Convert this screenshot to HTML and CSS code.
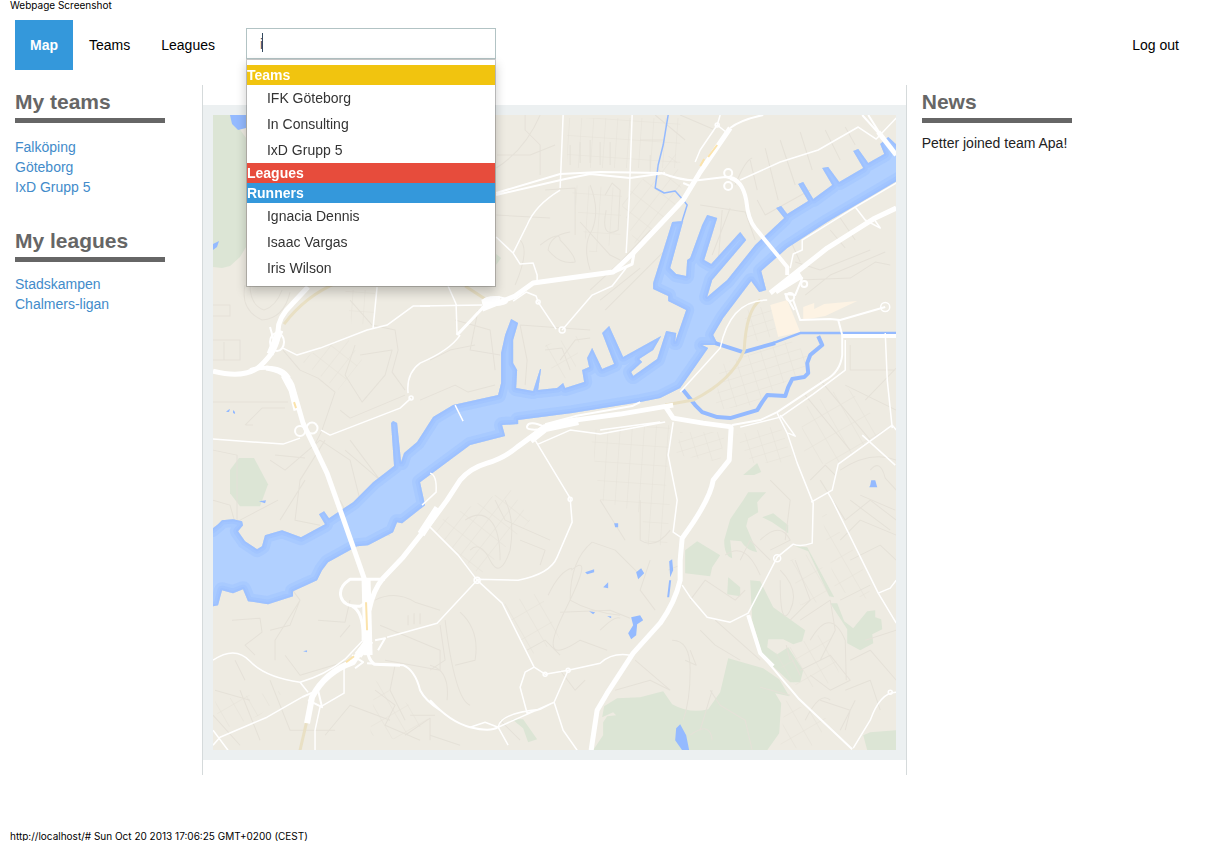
FILE: index.html
```html
<!DOCTYPE html>
<html lang="en">
<head>
<meta charset="utf-8">
<title>Map</title>
<link rel="stylesheet" href="styles.css">
</head>
<body>
<p class="page-note">Webpage Screenshot</p>
<header class="topbar">
  <nav class="menu">
    <a class="menu-link active" href="#">Map</a>
    <a class="menu-link" href="#">Teams</a>
    <a class="menu-link" href="#">Leagues</a>
  </nav>
  <div class="search">
    <input class="search-input" type="text" value="i" aria-label="Search" autofocus onfocus="this.setSelectionRange(1,1)">
    <span class="caret"></span>
    <div class="results">
      <h2 class="group group-teams">Teams</h2>
      <a class="result" href="#">IFK Göteborg</a>
      <a class="result" href="#">In Consulting</a>
      <a class="result" href="#">IxD Grupp 5</a>
      <h2 class="group group-leagues">Leagues</h2>
      <h2 class="group group-runners">Runners</h2>
      <a class="result" href="#">Ignacia Dennis</a>
      <a class="result" href="#">Isaac Vargas</a>
      <a class="result" href="#">Iris Wilson</a>
    </div>
  </div>
  <a class="menu-link logout" href="#">Log out</a>
</header>
<div class="columns">
  <aside class="side">
    <section class="block">
      <h1 class="heading">My teams</h1>
      <ul class="links links-teams">
        <li><a href="#">Falköping</a></li>
        <li><a href="#">Göteborg</a></li>
        <li><a href="#">IxD Grupp 5</a></li>
      </ul>
    </section>
    <section class="block">
      <h1 class="heading">My leagues</h1>
      <ul class="links">
        <li><a href="#">Stadskampen</a></li>
        <li><a href="#">Chalmers-ligan</a></li>
      </ul>
    </section>
  </aside>
  <main class="center">
    <div class="map-frame">
      <svg class="map" viewBox="213 115 683 635" role="img" aria-label="Map of Göteborg">
        <defs>
          <pattern id="gridA" width="11" height="17" patternUnits="userSpaceOnUse" patternTransform="rotate(38)"><path class="grid" d="M0 0H11M0 0V17"/></pattern>
          <pattern id="gridB" width="13" height="9" patternUnits="userSpaceOnUse" patternTransform="rotate(-17)"><path class="grid" d="M0 0H13M0 0V9"/></pattern>
          <pattern id="gridC" width="12" height="19" patternUnits="userSpaceOnUse" patternTransform="rotate(4)"><path class="grid" d="M0 0H12M0 0V19"/></pattern>
          <pattern id="gridD" width="15" height="22" patternUnits="userSpaceOnUse" patternTransform="rotate(-30)"><path class="grid" d="M0 0H15M0 0V22"/></pattern>
          <path id="river" d="M205 529H212L218 524 222 520 233 519 242 521 243 525 238 531 245 541 257 549 262 546 265 535 282 530 301 537 325 524 319 514 324 511 329 518 353 502 373 482 394 466 391 423 393 421 397 423 401 462 404 453 417 442 433 417 453 405 498 395 501 383V353L505 335 511 319 518 323 513 340V363L517 370 516 388 533 391 540 369 541 369 538 390 557 388 563 383 565 388 584 382 582 370 589 367 587 358 592 348 602 369 614 364 602 333 609 326 623 357 661 336 653 350 639 359 642 362 631 372 633 376 657 359 666 331 676 333 675 342 686 310 668 301V296L653 289V283L672 222 683 221 670 268 676 274 686 276 687 260 690 258 702 225 707 215 717 218 704 260 711 264 740 232 746 240 712 280 707 297 727 280 755 245 784 218 776 208 781 206 787 214 808 201 798 184 803 182 813 199 832 185 822 168 828 167 839 182 863 168 853 151 858 149 868 163 884 154 880 144 888 137 905 153V176L827 222 787 248 761 271 766 290 759 292 751 281 723 318 713 335 718 345 702 345 708 348 680 388 660 398 640 402 572 413 518 420V424L502 425 505 436 470 445 420 482 425 505 402 523 397 522 393 532 368 545 357 546 328 562 322 570 317 580 293 591V596L268 604 248 601 243 589 233 593 222 590 218 605 205 608Z"/>
          <clipPath id="riverClip"><use href="#river"/></clipPath>
        </defs>
        <g class="park">
          <path d="M213 115H231Q240 130 246 138V247L240 257 230 266 222 268 213 267Z"/>
          <path d="M239 458H254L268 484 260 506H240L230 493V470Z"/>
          <path d="M593 750L603 735V722L607 716 616 715 613 712 602 717 604 706 617 698 640 697 663 691 672 704Q690 714 708 709L720 692 728 658 763 668 779 679 789 696 775 693 781 703 779 733 767 750Z"/>
          <path d="M743 500L748 492H766L757 502 758 512 748 518 746 526 757 552Q746 550 741 541L730 540 732 558Q724 556 724 540L730 519Z"/>
          <path d="M743 475L757 463 761 472 754 475ZM762 517L773 513 788 525V533L772 522Z"/>
          <path d="M685 550L697 541 720 555 712 567 710 576 685 573ZM728 577L740 587V596L727 594Z"/>
          <path d="M750 580L760 581 773 607 805 630 802 641 793 644 783 639 768 639 767 647 777 654 788 647 803 670 800 682 790 682 763 657 752 620Z"/>
          <path d="M795 546L807 547 834 597 829 596 808 551ZM830 603H837L844 621 853 628 867 611 875 610 875 617 881 619 882 629 872 634 873 643 860 650 847 643V629Z"/>
          <path d="M863 735L870 732 896 730V750H867ZM512 719H523L537 739 528 742 523 728ZM496 254L501 258 496 265Z"/>
        </g>
        <g class="zone"><path d="M770 305L787 300 800 332 778 337ZM803 307L814 303V309L824 304 857 301 825 316 803 320Z"/></g>

        <!-- local streets -->
        <g stroke="none">
          <path fill="url(#gridA)" d="M430 525L510 488 530 520 480 575ZM620 200L675 150 683 200 636 248ZM300 360L345 335 362 360 338 390Z"/>
          <path fill="url(#gridB)" d="M745 310L770 305 776 335 745 345ZM720 365L790 340 808 355 803 372 780 385 752 405 715 410ZM735 435L780 425 793 462 752 463ZM680 432L725 432 720 462 676 455Z"/>
          <path fill="url(#gridC)" d="M567 118H680V168H567ZM570 185L622 188 620 240 590 255ZM345 290H375V322L352 326ZM590 430L670 425 664 520 600 500ZM640 495L670 495 667 545 645 545Z"/>
          <path fill="url(#gridD)" d="M800 410L845 385 885 430 835 465 805 462ZM500 605L540 592 560 640 530 655ZM790 560L818 550 830 600 800 605ZM215 700L285 690 260 715 220 730ZM585 400L655 360 630 380 600 385ZM770 655L830 630 840 680 800 690ZM820 505L860 560 872 600 835 590ZM375 680L430 720 400 740 370 735ZM545 345L580 335 575 375 560 380 545 360ZM785 700L830 720 810 748 780 748Z"/>
        </g>
        <g class="street">
          <path d="M245 285Q240 310 262 320Q284 318 290 292M213 305H230V316H213M213 340H240V360H224V342M226 360H213M213 402H288M245 425L262 408H285M253 425H246M250 285Q250 305 264 310Q276 306 282 290"/>
          <path d="M283 350L300 370 318 378 335 392 322 430 315 444M350 300L372 325 395 330 398 350 392 372 405 390M360 355L392 350 385 375 362 402 345 375 355 345M340 410L350 418 405 395M430 360L450 350 475 345M478 310L470 350 500 355M455 320L490 330 495 370"/>
          <path d="M420 400L455 385 468 392 495 385M520 325L590 330M520 325L527 360 525 385M560 360L575 340 590 338M545 350L562 348 570 370M590 290L620 262 650 230M600 300L640 268M605 310L660 255 678 240"/>
          <path d="M496 168Q525 150 540 115M525 115V130L540 145V175M497 155H530L555 145M545 190L575 188V235M496 215L550 218M605 195L612 183 620 190 618 230Q600 240 606 210M540 245Q560 230 560 240Q575 255 575 262Q560 265 548 250Q550 235 570 232M515 285Q530 250 520 240M580 222L610 255 620 260M590 185Q600 210 592 230Q582 245 590 270"/>
          <path d="M570 145V165M580 142V163M590 140V163M600 142V165M610 142V165M650 155V175M655 115L685 140M680 115L715 130M640 140H665M700 205L745 212 755 240M722 210L718 262M730 208L712 255M750 160L757 190M765 148L778 200M780 140L795 185M800 132L812 170M825 130L840 160M845 127L855 145M735 185Q745 160 752 158M757 200L765 215 810 190"/>
          <path d="M795 262L820 270 870 250M805 295L830 275 885 252M800 280L850 278 875 262 890 265M830 230L845 248M840 218L855 240M790 240L800 262M850 345V370H895M865 400L896 368M845 385L896 410M820 380L870 440M805 395L850 450M840 470Q870 450 896 460M810 480L825 465 835 475M870 470Q880 458 885 478L896 490M860 495L895 510M850 500L890 530"/>
          <path d="M213 450L237 455V530M213 500L230 505 240 540M270 460L285 470 320 440M325 440L300 480 295 520 320 525M320 440L350 460 360 500M345 450L380 480M350 440L395 500M275 455L305 458M278 500L240 520M305 480L280 520"/>
          <path d="M232 620L260 618 262 632 245 645 255 655M285 580L300 600 290 625 270 630M300 600L275 640V660M318 620L345 622 350 600M350 625L340 637M375 600Q395 590 415 602L440 610M408 615V625M414 613V624M420 613V624M340 500L355 530 390 535M235 660L245 680M215 690L250 700M285 655L300 675 350 660M213 715L240 745M240 690L260 740M270 680L290 730 335 730"/>
          <path d="M375 690L395 705 385 725 420 740M395 665L390 690 405 720M325 735L350 705 390 720M410 715H435M405 735L430 718V740M380 625L440 650V670L385 660M440 625L445 660 430 670M460 612Q480 630 475 660L455 665M445 620Q455 700 470 705M430 665Q450 670 447 700M465 520Q480 510 490 520T500 560M470 550Q480 540 490 560T510 550Q515 520 505 500M520 540L545 550 540 565M495 500L505 520 550 540"/>
          <path d="M571 570Q595 550 565 610T580 640L607 650M592 542Q570 560 570 600Q590 612 620 615M592 542L615 550 640 575M548 595Q560 570 572 568M560 612L610 610 630 618M600 630Q615 615 620 618M500 720L520 740M560 670L575 690 585 680M527 650L545 640 560 655M640 500V540Q655 550 670 530M650 560L640 590 655 610M430 735L460 745M600 500L625 540M615 690L650 680 670 690M635 660L670 690"/>
          <path d="M672 640Q690 640 690 670T683 720M690 650L696 665 685 660M710 690L720 705 745 720 752 750M700 730L712 690M690 735Q710 720 712 740M760 687L790 695M668 570L680 565M690 600L705 580 735 600 745 590M700 630L715 645 740 660M715 620L760 660M725 555Q745 540 760 575M760 540Q780 520 790 540L770 550"/>
          <path d="M780 570Q800 590 790 610T780 580M795 560L810 600 790 620M800 620L830 600 835 630 820 660M810 640Q830 605 845 640L846 680M800 670L830 655 850 680 830 690 810 675M850 660L870 650 896 680M845 690L870 680 880 710M855 700L840 730M820 700L850 710 845 730M820 480L845 520 870 500 896 520M840 540L860 520 896 535M850 560L880 545 896 560M840 600L870 585M865 640L896 630M805 720Q820 690 830 700M785 540L790 500 770 480M740 560L750 540 770 560M790 655L800 675M786 645L790 660"/>
        </g>

        <!-- water -->
        <use class="water" href="#river"/>
        <g clip-path="url(#riverClip)">
          <use class="shore shore-outer" href="#river"/>
          <use class="shore shore-middle" href="#river"/>
          <use class="shore shore-inner" href="#river"/>
        </g>
        <g class="pond">
          <path d="M230 115H246V128L238 130 232 124ZM213 244L219 241 217 247 213 250ZM226 412L228 410 230 409 229 412ZM233 410L235 412 235 414 233 413ZM259 501L266 500 265 503ZM636 572L641 568 644 573 638 579ZM585 572L594 569 594 572 587 574ZM603 587L608 582V588ZM589 611L595 612 593 614ZM614 523H618V527H615ZM631 617L640 615 643 620 637 624 636 635 631 639 628 633 633 625ZM870 485L871 480 875 480 877 487H869ZM669 561L672 559 673 570 670 577ZM669 580H671L669 597H667ZM676 728L680 724 686 735 689 750H682L675 740ZM303 651L307 650V652ZM607 616H611V618Z"/>
        </g>
        <g class="canal">
          <path stroke-width="1.5" d="M668 115L663 145 658 165 655 188 664 193 675 191 683 200 687 205 682 221"/>
          <path stroke-width="4" d="M715 343L743 352 775 343"/><path stroke-width="2.5" d="M773 343L800 333H896"/>
          <path stroke-width="4" d="M683 390L695 405 702 412 717 417 730 418 757 410 762 402 767 395 785 396 788 387 792 379 804 377 808 373 807 363 810 355 822 345 818 336"/>
        </g>

        <!-- railway -->
        <g class="rail"><path d="M760 300Q746 310 744 350Q733 380 693 400L665 405"/><path d="M284 324Q305 296 338 282M465 286L485 299M307 720L300 750"/></g>

        <!-- secondary roads -->
        <g class="road">
          <path d="M563 115L560 188M632 115L629 200 626 253M560 190Q535 205 527 225L513 253 520 264 533 263 537 275V284M496 237L513 253M513 301L526 292 536 296 538 302 556 329M562 330L592 295 612 286 626 268M456 304L448 286M456 304L457 335M420 306L482 305"/>
          <path d="M460 335Q450 350 420 363Q406 373 408 393M411 398L400 408 330 435 321 430M283 348L297 355 320 348 367 330 387 325 413 306H430M377 287L373 328M213 439L283 444 300 438"/>
          <path d="M213 660Q235 645 250 661T300 682Q325 675 345 659L363 640M213 745L220 737 267 717 302 697M213 730L228 750M344 665V693L320 707 315 730V750M300 682L308 692"/>
          <path d="M430 527L458 555 477 580 502 603 534 667 545 674 568 670 600 663Q612 652 630 655M477 580L437 623 387 637M535 440L570 498 572 522 557 557Q550 574 518 580L477 579"/>
          <path d="M568 670L554 702 563 730 577 750M554 702L498 727 485 722 470 727M534 667L525 672 520 687 527 713 540 709M498 727Q500 713 540 709L554 702M498 727L508 745"/>
          <path d="M673 422L668 455 677 500 673 532 682 538M680 392L720 348Q730 300 767 300M777 413L787 433 797 463 813 503 812 543Q800 547 793 544L777 557 748 613 730 622 707 617 690 597 682 585"/>
          <path d="M811 502L832 490 838 464 892 425 896 430M885 333L887 380 892 428M862 435L895 465M828 493L832 500 878 593 896 623M878 593L890 588 896 580M788 433L795 436 780 415"/>
          <path d="M853 748L870 720Q880 692 896 692M600 430L660 422M538 444L570 430 600 434 665 422M740 180L780 162 818 150 858 127 876 139 896 118M717 125L700 150 695 162M720 115L717 125 727 133M790 268L793 254 802 250V240L855 207 896 183M855 207L865 220 880 228 873 218M845 340V370L813 394 780 417 740 427"/>
          <path d="M430 473Q437 475 436 492L422 505M455 405L463 421"/>
          <circle cx="411" cy="398" r="2"/><circle cx="562" cy="330" r="3"/><circle cx="477" cy="580" r="3"/><circle cx="570" cy="499" r="2"/><circle cx="885" cy="307" r="4.5"/><circle cx="568" cy="670" r="2"/><circle cx="545" cy="674" r="2"/><circle cx="538" cy="302" r="2"/><circle cx="717" cy="125" r="2"/><circle cx="777" cy="558" r="3.5"/><circle cx="890" cy="692" r="2"/>
        </g>
        <g class="road wide">
          <path d="M496 193L560 174 600 172 661 173Q685 182 700 180L725 177Q742 180 746 200Q748 220 755 228L787 267V275M496 195L565 179 590 174 630 178 665 173"/>
          <path stroke-width="4" d="M730 178Q742 180 746 200Q748 220 755 228L787 267V275"/>
          <path d="M793 300L800 320 830 319 840 320 885 307M838 320L842 335M842 335V355Q840 372 825 380L777 412 760 420 732 425M748 615L760 653 798 698 852 749M430 700Q450 722 470 727T498 727M367 663L403 665Q415 670 420 690Q425 700 440 710"/>
          <path stroke-width="4" d="M748 615L760 653 773 666M842 336H896"/>
          <path d="M730 128Q740 120 763 115M862 115L880 135M868 115L882 137M550 428Q525 432 527 426T545 427M545 424L575 416 632 406 640 402"/>
          <circle cx="728" cy="173" r="4"/><circle cx="728" cy="186" r="4"/><circle cx="804" cy="284" r="3"/><circle cx="790" cy="297" r="4"/><circle cx="312" cy="428" r="5.5"/><circle cx="300" cy="431" r="5"/><ellipse cx="277" cy="342" rx="7" ry="9"/><ellipse cx="495" cy="301" rx="12" ry="4"/><path d="M780 290L792 280 802 278 795 295 785 294 794 310M683 183L690 186 697 178M375 640L385 638 378 650M352 655L363 662 355 668M302 697L318 690 322 707 308 700M275 345L270 327"/>
        </g>

        <!-- motorways -->
        <g class="highway">
          <path stroke-width="5" d="M213 371Q245 379 260 366Q278 350 278 333Q277 318 292 304L308 287M896 208L873 219 827 248 770 293"/>
          <path stroke-width="7" d="M270 354L280 330M801 275L775 291"/>
          <path stroke-width="4" d="M250 370Q280 363 289 378"/>
          <path stroke-width="5" d="M266 368Q285 370 292 385L303 423 327 473 343 518 364 578 370 600"/>
          <path stroke-width="7" d="M284 375L292 390 297 410"/>
          <path stroke-width="9" d="M366 579L368 655"/>
          <path stroke-width="6" d="M369 638L353 662Q325 672 312 697L307 723"/>
          <path stroke-width="5" d="M369 610Q373 590 383 578L403 557 430 523 447 500 460 480Q470 468 487 463T517 447L543 428 560 422 620 414 673 405"/>
          <path stroke-width="8" d="M530 440L545 428 578 421M421 534L438 508M358 655L370 640"/>
          <path stroke-width="5" d="M665 406L673 418 703 423 733 427"/>
          <path stroke-width="5" d="M731 427L729 460 713 480Q710 500 682 538L680 560V580Q675 602 660 623L633 653 607 693 597 710 591 750"/>
          <path stroke-width="5" d="M482 309L515 296 533 283 613 272 633 253 683 200 700 172 730 128"/>
          <path stroke-width="7" d="M482 303L500 299"/>
          <path stroke-width="3" d="M457 335L490 300M385 579H350Q338 587 341 597T360 606L373 598M352 606Q364 612 363 640M370 640Q364 655 374 664L400 665M614 272L632 264 634 252"/>
          <path stroke-width="5" d="M878 132L896 155"/>
        </g>
        <g class="tunnel"><path d="M366 602L367 630M346 662L354 656M294 402L296 408M717 145L708 157M704 159L700 166"/></g>
      </svg>
    </div>
  </main>
  <aside class="side">
    <h1 class="heading">News</h1>
    <p class="news-item">Petter joined team Apa!</p>
  </aside>
</div>
<footer class="page-foot">http://localhost/# Sun Oct 20 2013 17:06:25 GMT+0200 (CEST)</footer>
</body>
</html>
```
FILE: styles.css
```css
* {
  box-sizing: border-box;
}

body {
  margin: 0;
  background: #fff;
  color: #222;
  font: 14px/20px "Liberation Sans", Arial, sans-serif;
}

h1, h2, p, ul {
  margin: 0;
  padding: 0;
}

a {
  color: #428bca;
  text-decoration: none;
}

.page-note,
.page-foot {
  padding: 0 10px;
  color: #000;
  font-family: Inter, "Liberation Sans", sans-serif;
  font-size: 10px;
  line-height: 10px;
}

.topbar {
  display: flex;
  align-items: center;
  padding: 0 15px;
  margin-top: 10px;
}

.menu {
  display: flex;
  gap: 1px;
}

.menu-link {
  padding: 15px;
  color: #000;
}

.menu-link.active {
  background: #3498db;
  color: #fff;
  font-weight: bold;
}

.logout {
  margin-left: auto;
}

.search {
  position: relative;
  width: 250px;
  height: 34px;
  margin-left: 16px;
}

.search-input {
  display: block;
  width: 100%;
  height: 31px;
  padding: 0 13px;
  border: 1px solid #b2c3c4;
  border-radius: 0;
  outline: 0;
  background: #fff;
  color: #34495e;
  caret-color: transparent;
  font: inherit;
}

.caret {
  position: absolute;
  top: 5px;
  left: 16px;
  width: 1px;
  height: 19px;
  background: #34495e;
}

.results {
  position: absolute;
  z-index: 2;
  top: 31px;
  left: 0;
  width: 100%;
  padding: 5px 0;
  border: 1px solid rgba(0, 0, 0, 0.2);
  background: #fff;
  background-clip: padding-box;
  box-shadow: 0 5px 10px rgba(0, 0, 0, 0.2);
}

.group {
  color: #fff;
  font-size: 14px;
  line-height: 20px;
}

.group-teams {
  background: #f1c40f;
}

.group-leagues {
  background: #e74c3c;
}

.group-runners {
  background: #3498db;
}

.result {
  display: block;
  padding: 3px 20px;
  color: #333;
}

.columns {
  display: grid;
  grid-template-columns: minmax(0, 2fr) minmax(0, 7fr) minmax(0, 3fr);
  margin-top: 15px;
}

.side {
  padding: 5px 15px;
}

.heading {
  width: 150px;
  max-width: 100%;
  padding-bottom: 4px;
  border-bottom: 5px solid #666;
  color: #666;
  font-size: 21px;
  line-height: 24px;
}

.block {
  margin-bottom: 32px;
}

.links {
  margin-top: 12px;
  list-style: none;
}

.links-teams {
  margin-top: 14px;
}

.news-item {
  margin-top: 10px;
}

.center {
  padding: 20px 0 15px;
  border: solid #d5dadb;
  border-width: 0 1px;
}

.map-frame {
  padding: 10px;
  background: #ecf0f1;
}

.map {
  display: block;
  width: 100%;
  height: auto;
  background: #eeebe2;
}

.map path,
.map circle,
.map ellipse {
  stroke-linejoin: round;
}

.park {
  fill: #dce5d5;
}

.zone {
  fill: #fdf3e4;
}

.grid,
.street {
  fill: none;
  stroke: #e5e1d8;
  stroke-width: 1;
}

.water {
  fill: #b1d0ff;
}

.shore {
  fill: none;
  stroke: #8fb8ff;
  stroke-opacity: 0.25;
}

.shore-outer {
  stroke-width: 16;
}

.shore-middle {
  stroke-width: 9;
}

.shore-inner {
  stroke-width: 4;
}

.pond {
  fill: #94baff;
}

.canal {
  fill: none;
  stroke: #94baff;
}

.rail {
  fill: none;
  stroke: #e9e0c4;
  stroke-width: 3;
}

.road {
  fill: none;
  stroke: #fff;
  stroke-width: 1.5;
}

.road.wide {
  stroke-width: 2;
}

.highway {
  fill: none;
  stroke: #fff;
}

.tunnel {
  fill: none;
  stroke: #fbe3ab;
  stroke-width: 2;
}

.page-foot {
  margin-top: 56px;
}
```
